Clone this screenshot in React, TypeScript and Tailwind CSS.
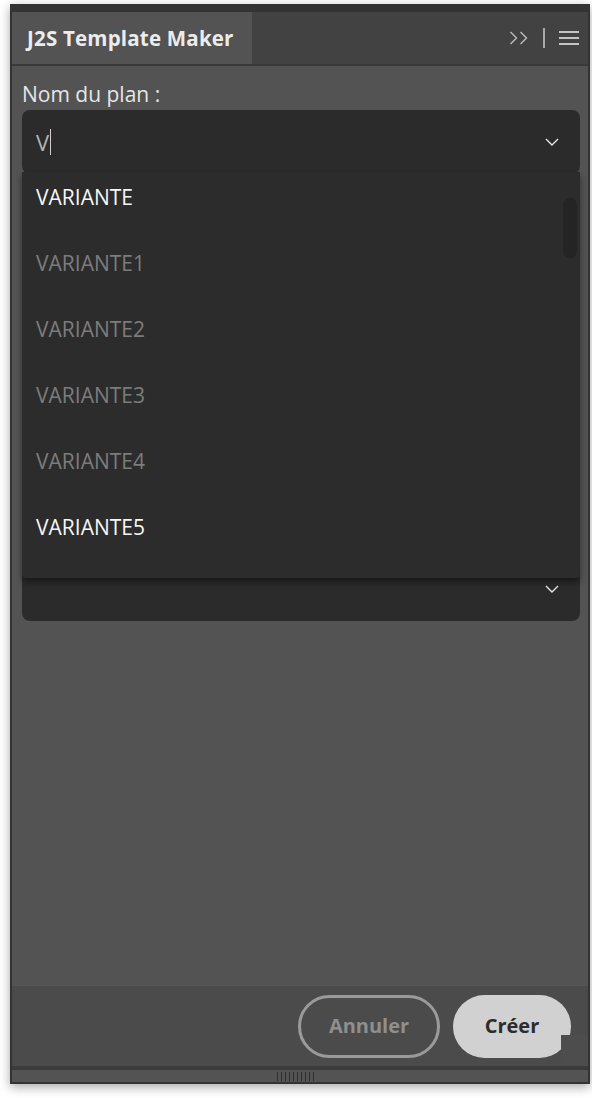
import React from "react";

const items = [
  { label: "VARIANTE", active: true },
  { label: "VARIANTE1", active: false },
  { label: "VARIANTE2", active: false },
  { label: "VARIANTE3", active: false },
  { label: "VARIANTE4", active: false },
  { label: "VARIANTE5", active: true },
];

function Chevron() {
  return (
    <svg width="14" height="8" viewBox="0 0 14 8" fill="none">
      <path d="M1 1l6 6 6-6" stroke="#e6e6e6" strokeWidth="1.4" />
    </svg>
  );
}

export default function App() {
  return (
    <div className="h-[1098px] w-[592px] bg-white pt-[4px] pl-[10px] font-['Open_Sans',sans-serif]">
      <div className="flex h-[1080px] w-[580px] flex-col border-x-2 border-t-8 border-b-2 border-[#333333] shadow-[0_3px_10px_rgba(0,0,0,0.35)]">
        {/* tab bar */}
        <div className="flex h-[52px] bg-[#424242]">
          <div className="flex w-[240px] items-center bg-[#535353] pl-[15px]">
            <span className="text-[20.5px] font-bold tracking-[0.2px] text-[#ececec]">J2S Template Maker</span>
          </div>
          <div className="flex flex-1 items-center justify-end gap-[14px] pr-[9px]">
            <svg width="20" height="14" viewBox="0 0 20 14" fill="none">
              <path d="M1.5 1l6 6-6 6M11.5 1l6 6-6 6" stroke="#bcbcbc" strokeWidth="1.4" />
            </svg>
            <div className="h-[20px] w-[2px] bg-[#a8a8a8]" />
            <svg width="20" height="14" viewBox="0 0 20 14" fill="none">
              <path d="M0 1h20M0 7h20M0 13h20" stroke="#c4c4c4" strokeWidth="2" />
            </svg>
          </div>
        </div>
        <div className="h-[2px] bg-[#3a3a3a]" />

        {/* content */}
        <div className="relative flex flex-1 flex-col bg-[#535353] pt-[14px] pr-[8px] pl-[10px]">
          <label className="text-[21px] leading-[28px] text-[#e6e6e6]">Nom du plan :</label>

          <div className="relative mt-[2px]">
            <div className="flex h-[64px] items-center justify-between rounded-[8px] bg-[#2b2b2b] pr-[21px] pl-[14px]">
              <div className="flex items-center">
                <span className="text-[22px] text-[#b4b4b4]">V</span>
                <span className="ml-[1px] h-[26px] w-[1px] bg-[#cfcfcf]" />
              </div>
              <Chevron />
            </div>

            {/* dropdown list */}
            <div className="absolute top-[62px] right-0 left-0 z-10 h-[406px] overflow-hidden rounded-b-[4px] bg-[#2c2c2c] shadow-[0_4px_6px_rgba(0,0,0,0.45)]">
              <div className="-mt-[7px]">
                {items.map((it) => (
                  <div
                    key={it.label}
                    className={`flex h-[66px] items-center pl-[14px] text-[21px] ${
                      it.active ? "text-[#f6f6f6]" : "text-[#7c7c7c]"
                    }`}
                  >
                    {it.label}
                  </div>
                ))}
              </div>
              <div className="absolute top-[26px] right-[3px] h-[60px] w-[14px] rounded-full bg-[#242424]" />
            </div>
          </div>

          <div className="mt-[383px] flex h-[64px] items-center justify-end rounded-[8px] bg-[#2b2b2b] pr-[21px]">
            <Chevron />
          </div>

          <div className="flex-1" />

          {/* footer */}
          <div className="-mr-[8px] -ml-[10px] flex h-[81px] items-center justify-end gap-[13px] border-t border-[#565656] bg-[#4b4b4b] pr-[17px]">
            <button className="h-[63px] w-[142px] rounded-full border-[3px] border-[#9a9a9a] text-[20px] font-bold text-[#8f8f8f]">
              Annuler
            </button>
            <button className="h-[63px] w-[118px] rounded-full bg-[#d1d1d1] text-[20px] font-bold text-[#2c2c2c]">
              Créer
            </button>
          </div>
          <div className="absolute right-0 bottom-[16px] h-[31px] w-[27px] bg-[#4d4d4d]" />
          <div className="-mr-[8px] -ml-[10px] h-[4px] bg-[#3b3b3b]" />
          <div className="-mr-[8px] -ml-[10px] flex h-[12px] items-center justify-center bg-[#535353] pr-[10px]">
            <div className="flex gap-[3px]">
              {Array.from({ length: 10 }).map((_, i) => (
                <div key={i} className="h-[9px] w-[1px] bg-[#2e2e2e]" />
              ))}
            </div>
          </div>
        </div>
      </div>
    </div>
  );
}
